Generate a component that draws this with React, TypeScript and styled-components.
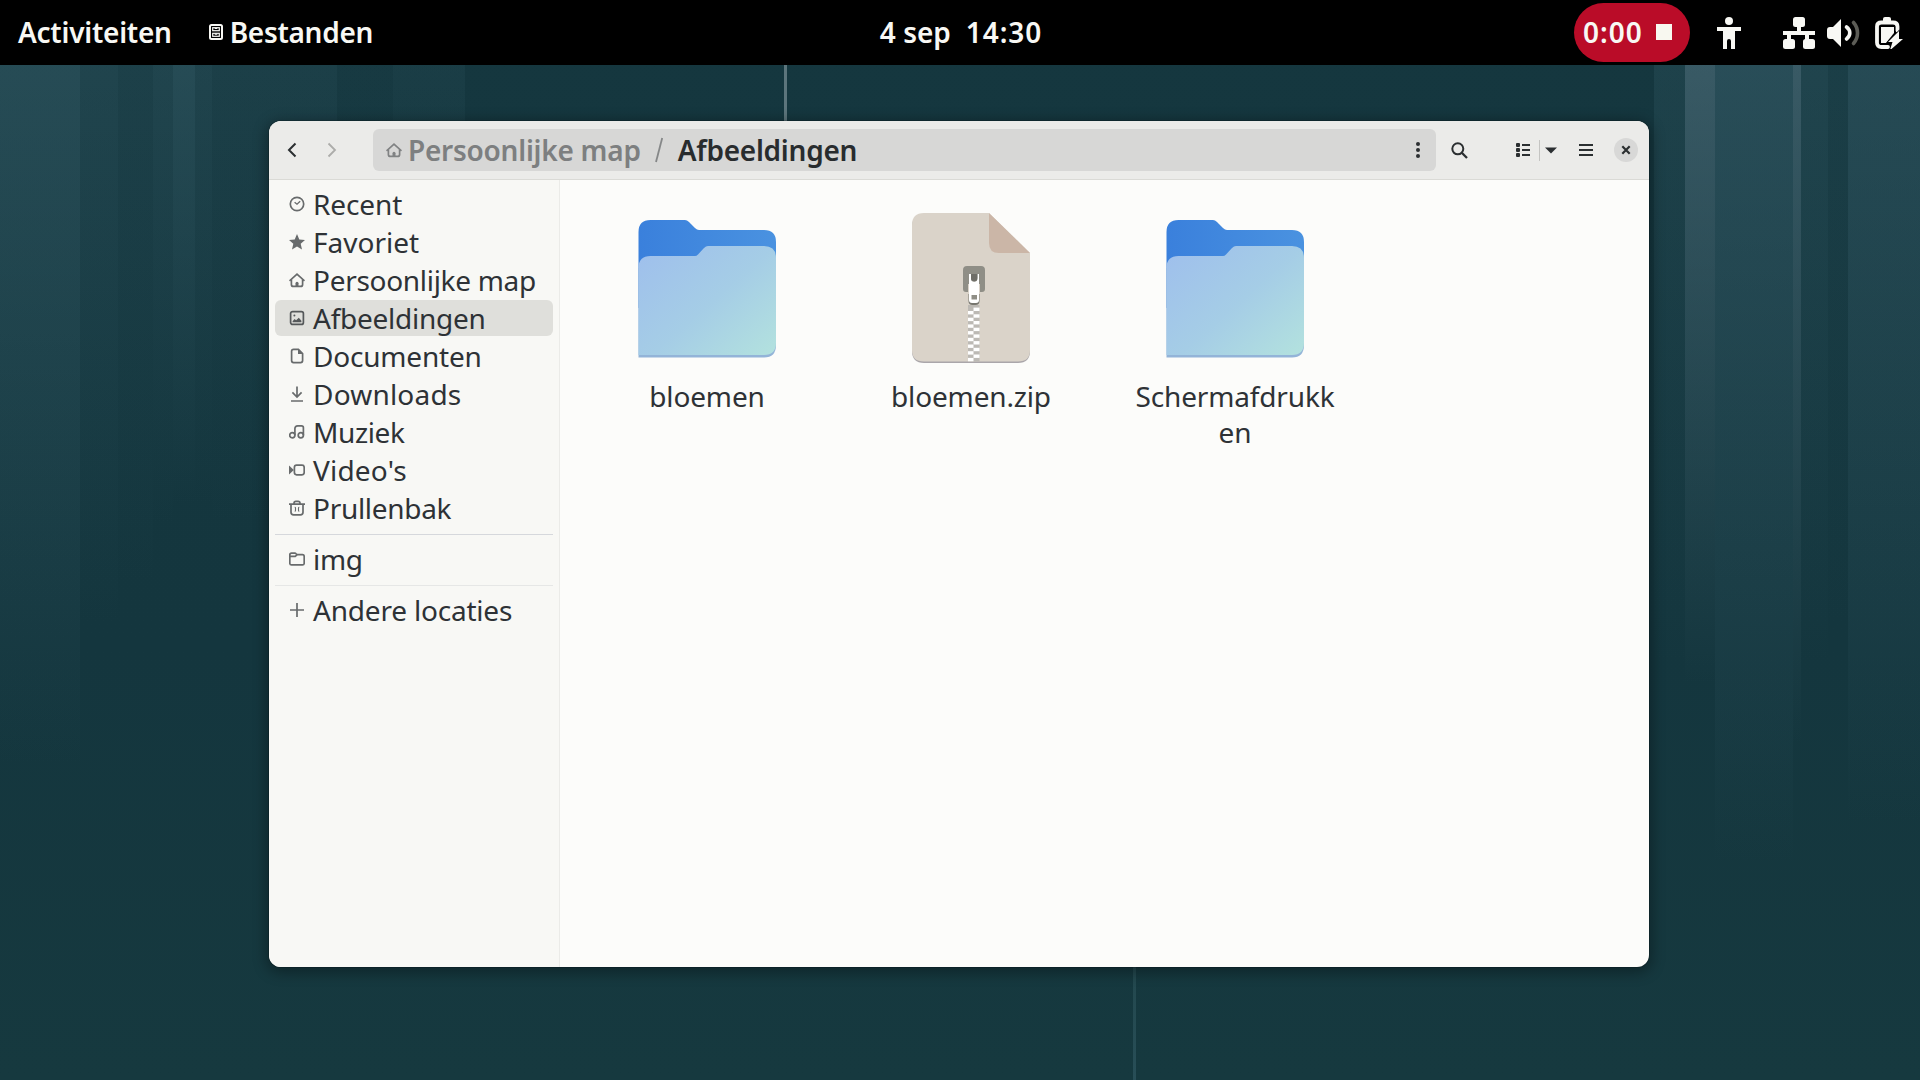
import React from 'react';
import styled, { createGlobalStyle } from 'styled-components';

const GlobalStyle = createGlobalStyle`
  *, *::before, *::after { box-sizing: border-box; }
  body { margin: 0; background: #15373f; }
`;

/* ---------- wallpaper ---------- */

type Strip = { x: number; w: number; color: string; h: number };

const strips: Strip[] = [
  { x: 0, w: 80, color: '62,104,116,.42', h: 700 },
  { x: 80, w: 38, color: '62,104,116,.27', h: 560 },
  { x: 118, w: 35, color: '62,104,116,.19', h: 520 },
  { x: 153, w: 20, color: '62,104,116,.28', h: 460 },
  { x: 173, w: 22, color: '62,104,116,.42', h: 440 },
  { x: 195, w: 17, color: '62,104,116,.26', h: 440 },
  { x: 212, w: 125, color: '62,104,116,.17', h: 460 },
  { x: 337, w: 56, color: '62,104,116,.06', h: 260 },
  { x: 393, w: 72, color: '62,104,116,.13', h: 260 },
  { x: 1654, w: 31, color: '62,104,116,.22', h: 600 },
  { x: 1685, w: 30, color: '92,124,138,.5', h: 620 },
  { x: 1715, w: 78, color: '66,106,120,.44', h: 800 },
  { x: 1793, w: 8, color: '92,124,138,.5', h: 680 },
  { x: 1801, w: 27, color: '62,104,116,.27', h: 600 },
  { x: 1828, w: 20, color: '62,104,116,.15', h: 560 },
  { x: 1848, w: 72, color: '66,106,120,.38', h: 760 },
];

const stripLayers = strips
  .map((s) => `linear-gradient(rgba(${s.color}), rgba(62,104,116,0)) ${s.x}px 65px / ${s.w}px ${s.h}px no-repeat`)
  .join(', ');

const Desktop = styled.div`
  width: 1920px;
  height: 1080px;
  overflow: hidden;
  display: flex;
  flex-direction: column;
  font-family: 'Noto Sans', 'Open Sans', sans-serif;
  font-size: 28px;
  line-height: 36px;
  color: #2e3236;
  background:
    ${stripLayers},
    linear-gradient(#5c757c, #5c757c) 784px 65px / 3px 60px no-repeat,
    linear-gradient(#22474d, #284e57) 1133px 960px / 3px 120px no-repeat,
    linear-gradient(#15373f, #14363e 60%, #16393f);
`;

/* ---------- top panel ---------- */

const Panel = styled.header`
  height: 65px;
  flex: none;
  background: #000;
  color: #f8f8f4;
  font-weight: 600;
  display: grid;
  grid-template-columns: 1fr auto 1fr;
  align-items: center;
`;

const PanelLeft = styled.div`
  display: flex;
  align-items: center;
  padding: 0 0 1px 18px;
`;

const PanelCenter = styled.div`
  display: flex;
  gap: 15px;
  padding: 0 0 1px 2px;
`;

const PanelRight = styled.div`
  display: flex;
  align-items: center;
  justify-content: flex-end;
  padding-right: 17px;
`;

const Text = styled.span<{ $track?: number }>`
  letter-spacing: ${(p) => p.$track ?? 0}px;
  white-space: nowrap;
`;

const AppMenu = styled.div`
  display: flex;
  align-items: center;
  gap: 6px;
  margin-left: 36px;
`;

const RecordPill = styled.div`
  width: 116px;
  height: 59px;
  border-radius: 30px;
  background: #ba0c28;
  display: flex;
  align-items: center;
  justify-content: space-between;
  padding: 0 18px 1px 9px;
`;

const StopSquare = styled.span`
  width: 16px;
  height: 16px;
  background: #f8f8f0;
`;

const StatusIcon = styled.svg<{ $gap: number }>`
  margin-left: ${(p) => p.$gap}px;
  display: block;
  flex: none;
`;

/* ---------- file manager window ---------- */

const Workspace = styled.main`
  flex: 1;
  display: flex;
  justify-content: flex-start;
  align-items: flex-start;
  padding: 56px 0 0 269px;
`;

const Window = styled.section`
  width: 1380px;
  height: 846px;
  border-radius: 12px;
  overflow: hidden;
  display: flex;
  flex-direction: column;
  background: #fcfcfa;
  box-shadow: 0 0 0 1px rgba(0, 0, 0, 0.15), 0 3px 14px 3px rgba(0, 0, 0, 0.32);
`;

const HeaderBar = styled.div`
  height: 59px;
  flex: none;
  background: #ebebe9;
  border-bottom: 1px solid #dadad6;
  display: flex;
  align-items: center;
  padding: 0 11px 0 3px;
`;

const IconButton = styled.button<{ $w: number; $ml?: number; $dim?: boolean }>`
  width: ${(p) => p.$w}px;
  height: 42px;
  margin: 0 0 0 ${(p) => p.$ml ?? 0}px;
  padding: 0;
  border: 0;
  background: none;
  color: ${(p) => (p.$dim ? '#acacaa' : '#2b2f31')};
  display: flex;
  align-items: center;
  justify-content: center;
  flex: none;
`;

const PathBar = styled.nav`
  flex: 1;
  height: 42px;
  margin-left: 21px;
  border-radius: 6px;
  background: #d7d7d6;
  display: flex;
  align-items: center;
  font-weight: 600;
  padding: 0 10px 0 13px;
`;

const Crumb = styled.span<{ $current?: boolean }>`
  display: flex;
  align-items: center;
  gap: 6px;
  white-space: nowrap;
  letter-spacing: -0.25px;
  color: ${(p) => (p.$current ? '#282c2e' : '#7d7f80')};
`;

const Slash = styled.svg`
  margin: 0 14px 0 13px;
  flex: none;
`;

const PathMenu = styled.span`
  margin-left: auto;
  display: flex;
`;

const Divider = styled.span`
  width: 1px;
  height: 21px;
  background: #c4c4c2;
`;

const CloseButton = styled.button`
  width: 24px;
  height: 24px;
  border: 0;
  padding: 0;
  margin-left: 12px;
  border-radius: 50%;
  background: #d8d8d7;
  color: #2b2f31;
  display: flex;
  align-items: center;
  justify-content: center;
`;

const Body = styled.div`
  flex: 1;
  display: flex;
`;

const Sidebar = styled.aside`
  width: 291px;
  flex: none;
  background: #f8f8f5;
  border-right: 1px solid #ebebe8;
  padding: 6px 6px 0;
  display: flex;
  flex-direction: column;
  gap: 2px;
`;

const Place = styled.div<{ $active?: boolean; $track?: number }>`
  height: 36px;
  border-radius: 6px;
  padding-left: 14px;
  display: flex;
  align-items: center;
  gap: 8px;
  white-space: nowrap;
  letter-spacing: ${(p) => p.$track ?? 0}px;
  background: ${(p) => (p.$active ? '#dfdfdb' : 'transparent')};
  svg { flex: none; margin-top: -1px; }
`;

const Separator = styled.div<{ $top: number; $bottom: number; $color: string }>`
  height: 1px;
  flex: none;
  margin: ${(p) => p.$top}px 0 ${(p) => p.$bottom}px;
  background: ${(p) => p.$color};
`;

const Files = styled.div`
  flex: 1;
  display: flex;
  align-items: flex-start;
  padding: 28px 0 0 15px;
`;

const FileCell = styled.figure`
  width: 264px;
  margin: 0;
  display: flex;
  flex-direction: column;
  align-items: center;
`;

const FileLabel = styled.figcaption`
  margin-top: 10px;
  width: 204px;
  text-align: center;
  overflow-wrap: anywhere;
  letter-spacing: -0.15px;
`;

/* ---------- drawings ---------- */

type PlaceIconName =
  | 'recent' | 'star' | 'home' | 'picture' | 'doc' | 'download'
  | 'music' | 'video' | 'trash' | 'folder' | 'plus';

const shapes: Record<PlaceIconName, React.ReactNode> = {
  recent: (
    <>
      <circle cx="8" cy="8" r="6.7" />
      <path d="M5.6 6.2 8 8.2l3.2-3" strokeWidth="1.3" />
    </>
  ),
  star: <path d="M8 0 10.300 5.400l5.700.6-4.300 3.800 1.300 5.700L8 12.500l-5 3 1.300-5.700L0 6l5.700-.6z" fill="currentColor" stroke="none" />,
  home: (
    <>
      <path d="M.5 8.900 8 2.200l7.500 6.700" />
      <path d="M2.4 7.500v4.900q0 2 2 2h7.200q2 0 2-2V7.500" />
      <path d="M6.500 14.500v-3.200a1.500 1.500 0 0 1 3 0v3.200z" fill="currentColor" stroke="none" />
    </>
  ),
  picture: (
    <>
      <rect x="1.6" y="1.6" width="12.800" height="12.800" rx="2" />
      <path d="M3.6 12.3v-1l2-2.2 1.5 1.2 2.700-2.600 2.600 3v1.600z" fill="currentColor" stroke="none" />
      <circle cx="5.4" cy="5.6" r="1" fill="currentColor" stroke="none" />
    </>
  ),
  doc: (
    <>
      <path d="M4.600 1.300h4.800l4.200 4.200v7.100q0 2-2 2H4.600q-2 0-2-2V3.300q0-2 2-2z" />
      <path d="M9 1v5h5z" fill="currentColor" stroke="none" />
    </>
  ),
  download: <path d="M8 .5v10.2M3.400 6.400 8 11l4.600-4.600M2 15h12" />,
  music: (
    <>
      <circle cx="3.3" cy="11.300" r="2.600" />
      <circle cx="11.800" cy="11.300" r="2.600" />
      <path d="M5.900 11.300V4.600q0-2.800 2.800-2.800h3.800q1.900 0 1.900 1.900v7.600" />
    </>
  ),
  video: (
    <>
      <rect x="5.400" y="3.200" width="9.800" height="9.600" rx="2.200" />
      <path d="M0 3.500l4.800 4.500L0 12.500z" fill="currentColor" stroke="none" />
    </>
  ),
  trash: (
    <>
      <path d="M0 4.100h16M5 4V3.200q0-1.900 1.900-1.900h2.200q1.900 0 1.900 1.900V4" />
      <path d="M2 4.500v7.700q0 2.600 2.600 2.600h6.800q2.600 0 2.600-2.600V4.500" />
      <path d="M5.700 7.300q.8 0 .8.8v2.400q0 .8-.8.8M10.300 7.300q-.8 0-.8.8v2.400q0 .8.8.8" strokeWidth="1.100" />
    </>
  ),
  folder: <path d="M.8 12.200V3.900q0-1.700 1.700-1.700h3.300q.8 0 1.300.6l.9.9h5.500q1.700 0 1.700 1.700v6.800q0 1.700-1.700 1.700h-11Q.8 13.900 .8 12.200zM1 5.400h5.200l1.800-1.500" />,
  plus: <path d="M8 1v14M1 8h14" />,
};

const PlaceIcon = ({ name, color = '#686b6c' }: { name: PlaceIconName; color?: string }) => (
  <svg width="16" height="16" viewBox="0 0 16 16" fill="none" stroke="currentColor" strokeWidth="1.700" color={color}>
    {shapes[name]}
  </svg>
);

const FolderArt = ({ id }: { id: string }) => (
  <svg width="160" height="160" viewBox="0 0 160 160">
    <defs>
      <linearGradient id={`${id}-back`} x1="0" y1="0" x2="1" y2="0">
        <stop offset="0" stopColor="#3a80dc" />
        <stop offset="1" stopColor="#4a92e0" />
      </linearGradient>
      <linearGradient id={`${id}-front`} x1="0" y1="0.1" x2="1" y2="1">
        <stop offset="0" stopColor="#9fc0ec" />
        <stop offset="0.5" stopColor="#a5cde6" />
        <stop offset="1" stopColor="#b3e2de" />
      </linearGradient>
    </defs>
    <path d="M11.500 100V24q0-12 12-12H58q2 0 4 2l6 6q2 2 4 2h65q12 0 12 12v66z" fill={`url(#${id}-back)`} />
    <path d="M11.500 149.500V60H149v77q0 12.500-12 12.500z" fill="#93b4d8" />
    <path d="M11.500 147V60q0-12 12-12H68q1.500 0 3-1.500l6-6.500q2-2 4-2h56q12 0 12 12v85q0 12-12 12z" fill={`url(#${id}-front)`} />
  </svg>
);

const teeth = [0, 1, 2, 3, 4, 5, 6, 7];

const ZipArt = () => (
  <svg width="160" height="160" viewBox="0 0 160 160">
    <path d="M33 7h65l41 40v96q0 12-12 12H33q-12 0-12-12V19Q21 7 33 7z" fill="#aaa6aa" />
    <path d="M33 5h65l41 40v97q0 11.500-12 11.500H33q-12 0-12-11.500V17Q21 5 33 5z" fill="#dad3c9" />
    <path d="M98 5l41 40h-31q-10 0-10-10z" fill="#cbb6a7" />
    <rect x="77" y="97" width="11.500" height="56.500" fill="#bcb9b4" />
    {teeth.map((i) => (
      <React.Fragment key={i}>
        <rect x="77" y={103 + i * 6.700} width="5.500" height="3.400" fill="#fff" />
        {<rect x="82.500" y={99.600 + i * 6.700} width="6" height="3.400" fill="#fff" />}
      </React.Fragment>
    ))}
    <path d="M76 58h14q4 0 4 4v19q0 3-3 3h-2V66H77v18h-2q-3 0-3-3V62q0-4 4-4z" fill="#8f8e86" />
    <rect x="76" y="62" width="14" height="14" fill="#8f8e86" />
    <path d="M77.500 86h11v7q0 4-4 4h-3q-4 0-4-4z" fill="#77766f" />
    <path d="M78 66h2v4.500a3.200 3.200 0 0 0 6.400 0V66H88v26q0 3-3 3h-4q-3 0-3-3z" fill="#fff" />
    <rect x="80.500" y="87" width="5.500" height="4.500" fill="#8f8e86" />
    <path d="M80 66h6.400v4a3.200 3.200 0 0 1-6.400 0z" fill="#6f6e68" />
  </svg>
);

const places: { icon: PlaceIconName; label: string; track?: number; active?: boolean }[] = [
  { icon: 'recent', label: 'Recent', track: -0.1 },
  { icon: 'star', label: 'Favoriet' },
  { icon: 'home', label: 'Persoonlijke map', track: -0.3 },
  { icon: 'picture', label: 'Afbeeldingen', track: -0.25, active: true },
  { icon: 'doc', label: 'Documenten', track: -0.2 },
  { icon: 'download', label: 'Downloads', track: 0.2 },
  { icon: 'music', label: 'Muziek', track: -0.4 },
  { icon: 'video', label: "Video's", track: 0.2 },
  { icon: 'trash', label: 'Prullenbak', track: -0.3 },
];

const files = [
  { label: 'bloemen', art: <FolderArt id="flowers" /> },
  { label: 'bloemen.zip', art: <ZipArt /> },
  { label: 'Schermafdrukken', art: <FolderArt id="shots" /> },
];

export default function App() {
  return (
    <Desktop>
      <GlobalStyle />
      <Panel>
        <PanelLeft>
          <Text $track={-0.25}>Activiteiten</Text>
          <AppMenu>
            <svg width="16" height="18" viewBox="0 0 16 18" fill="none" stroke="#f8f8f4">
              <rect x="2" y="2" width="12" height="14" rx="1.500" strokeWidth="2" />
              <rect x="4.700" y="4.700" width="6.600" height="3" strokeWidth="1.200" />
              <rect x="4.700" y="10.300" width="6.600" height="3" strokeWidth="1.200" />
              <path d="M6.700 5.500h2.600M6.700 11.200h2.600" strokeWidth="1.200" />
            </svg>
            <Text $track={-0.3}>Bestanden</Text>
          </AppMenu>
        </PanelLeft>
        <PanelCenter>
          <Text>4 sep</Text>
          <Text $track={0.9}>14:30</Text>
        </PanelCenter>
        <PanelRight>
          <RecordPill>
            <Text $track={1}>0:00</Text>
            <StopSquare />
          </RecordPill>
          <StatusIcon $gap={27} width="24" height="32" viewBox="0 0 24 32" fill="#f8f8f4">
            <circle cx="12" cy="4" r="4" />
            <path d="M0 10h24v4h-6v18h-4v-8q0-2-2-2t-2 2v8H6V14H0z" />
          </StatusIcon>
          <StatusIcon $gap={42} width="32" height="32" viewBox="0 0 32 32" fill="#f8f8f4">
            <rect x="10" y="0" width="12" height="10" rx="2.500" />
            <rect x="0" y="22" width="12" height="10" rx="2.500" />
            <rect x="20" y="22" width="12" height="10" rx="2.500" />
            <path d="M14 9h4v5h14v4h-6v5h-4v-5H8v5H4v-5H0v-4h14z" />
          </StatusIcon>
          <StatusIcon $gap={12} width="33" height="28" viewBox="0 0 33 28">
            <path d="M0 11q0-3 3-3h3l8-8v28l-8-8H3q-3 0-3-3z" fill="#f8f8f4" />
            <path d="M19.500 8q3.300 2.500 3.300 6t-3.300 6" fill="none" stroke="#f8f8f4" strokeWidth="3.600" strokeLinecap="round" />
            <path d="M26.500 3.500q4 4.500 4 10.500t-4 10.500" fill="none" stroke="#5c5c56" strokeWidth="3.600" strokeLinecap="round" />
          </StatusIcon>
          <StatusIcon $gap={15} width="28" height="32" viewBox="0 0 28 32">
            <path d="M8 5V2q0-2 2-2h4q2 0 2 2v3z" fill="#f8f8f4" />
            <path d="M13 30H6.500Q2 30 2 25.500V9.500Q2 5.500 6.500 5.500H18q4.500 0 4.500 4v4" fill="none" stroke="#f8f8f4" strokeWidth="3.800" strokeLinecap="round" />
            <path d="M6 10h13v6l-8 10H6z" fill="#f8f8f4" />
            <path d="M24 14v8h4L16.500 32h-1.200l2.200-7H13z" fill="#f8f8f4" stroke="#000" strokeWidth="1.400" paintOrder="stroke" />
          </StatusIcon>
        </PanelRight>
      </Panel>

      <Workspace>
        <Window>
          <HeaderBar>
            <IconButton $w={40} aria-label="Terug">
              <svg width="16" height="16" viewBox="0 0 16 16" fill="none" stroke="currentColor" strokeWidth="2"><path d="M11.500 1.500 5 8l6.500 6.500" /></svg>
            </IconButton>
            <IconButton $w={40} $dim aria-label="Vooruit">
              <svg width="16" height="16" viewBox="0 0 16 16" fill="none" stroke="currentColor" strokeWidth="1.800"><path d="M4.500 1.500 11 8l-6.500 6.500" /></svg>
            </IconButton>
            <PathBar>
              <Crumb>
                <PlaceIcon name="home" color="#808283" />
                Persoonlijke map
              </Crumb>
              <Slash width="10" height="26" viewBox="0 0 10 26" fill="none" stroke="#858788" strokeWidth="1.800"><path d="M8.200 1 2 25" /></Slash>
              <Crumb $current>Afbeeldingen</Crumb>
              <PathMenu>
                <svg width="16" height="16" viewBox="0 0 16 16" fill="#2b2f31">
                  <circle cx="8" cy="2" r="2" /><circle cx="8" cy="8" r="2" /><circle cx="8" cy="14" r="2" />
                </svg>
              </PathMenu>
            </PathBar>
            <IconButton $w={46} aria-label="Zoeken">
              <svg width="17" height="17" viewBox="0 0 17 17" fill="none" stroke="currentColor" strokeWidth="2"><circle cx="6.800" cy="6.800" r="5.500" /><path d="M10.800 10.800 16 16" strokeWidth="2.300" /></svg>
            </IconButton>
            <IconButton $w={32} $ml={25} aria-label="Lijst">
              <svg width="16" height="16" viewBox="0 0 16 16" fill="currentColor">
                <rect x="1" y="1" width="4" height="4" rx="1" /><rect x="1" y="6" width="4" height="4" rx="1" /><rect x="1" y="11" width="4" height="4" rx="1" />
                <rect x="7" y="2" width="8" height="2" /><rect x="7" y="7" width="8" height="2" /><rect x="7" y="12" width="8" height="2" />
              </svg>
            </IconButton>
            <Divider />
            <IconButton $w={22} aria-label="Weergave">
              <svg width="12" height="7" viewBox="0 0 12 7" fill="currentColor"><path d="M0 .5h12L6 6.500z" /></svg>
            </IconButton>
            <IconButton $w={32} $ml={8} aria-label="Menu">
              <svg width="16" height="16" viewBox="0 0 16 16" fill="currentColor"><rect x="1" y="2" width="14" height="2" /><rect x="1" y="7" width="14" height="2" /><rect x="1" y="12" width="14" height="2" /></svg>
            </IconButton>
            <CloseButton aria-label="Sluiten">
              <svg width="10" height="10" viewBox="0 0 10 10" fill="none" stroke="currentColor" strokeWidth="2.200"><path d="M1.300 1.300l7.400 7.400M8.700 1.300 1.300 8.700" /></svg>
            </CloseButton>
          </HeaderBar>
          <Body>
            <Sidebar>
              {places.map((p) => (
                <Place key={p.label} $active={p.active} $track={p.track}>
                  <PlaceIcon name={p.icon} color={p.active ? '#55585a' : undefined} />
                  {p.label}
                </Place>
              ))}
              <Separator $top={6} $bottom={4} $color="#d6d8dc" />
              <Place $track={-0.3}>
                <PlaceIcon name="folder" />
                img
              </Place>
              <Separator $top={6} $bottom={4} $color="#e6e7e6" />
              <Place $track={-0.2}>
                <PlaceIcon name="plus" />
                Andere locaties
              </Place>
            </Sidebar>
            <Files>
              {files.map((f) => (
                <FileCell key={f.label}>
                  {f.art}
                  <FileLabel>{f.label}</FileLabel>
                </FileCell>
              ))}
            </Files>
          </Body>
        </Window>
      </Workspace>
    </Desktop>
  );
}
